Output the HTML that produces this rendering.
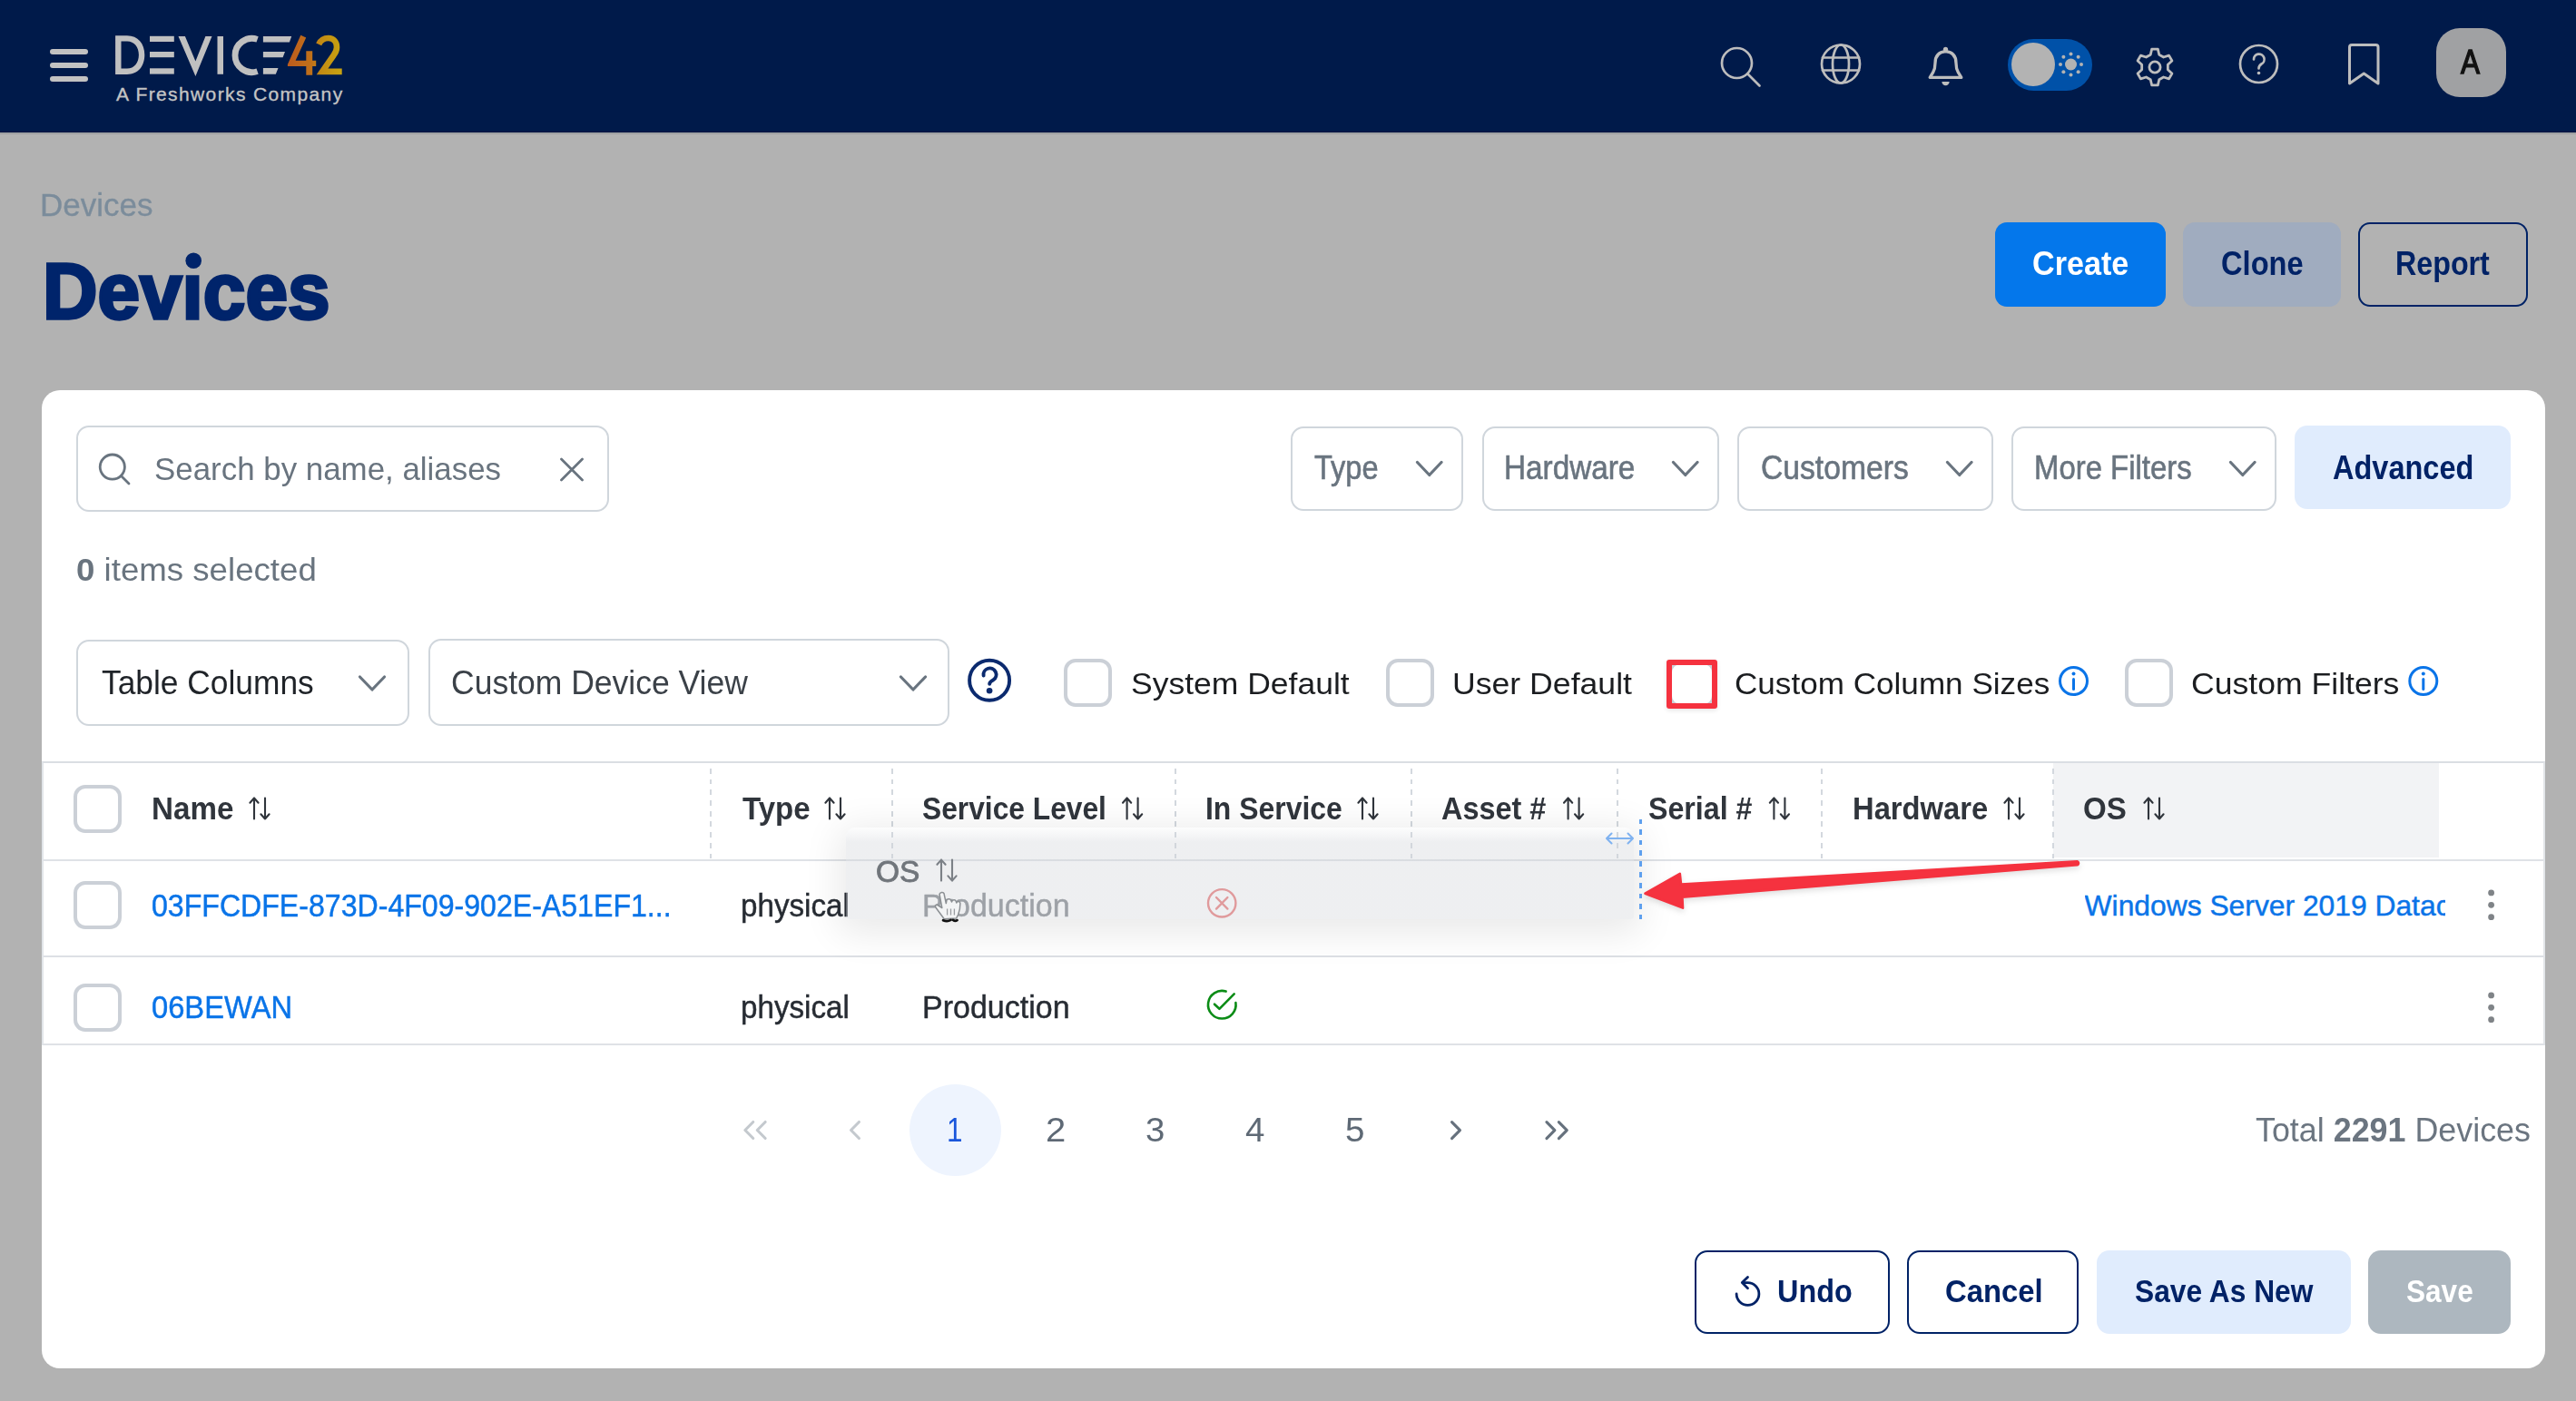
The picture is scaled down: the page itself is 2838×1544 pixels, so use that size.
<!DOCTYPE html><html><head><meta charset="utf-8"><style>
html,body{margin:0;padding:0;width:2838px;height:1544px;overflow:hidden;background:#b2b2b2;font-family:"Liberation Sans",sans-serif;}
.t{position:absolute;line-height:1;white-space:nowrap;}
svg{position:absolute;overflow:visible;}
</style></head><body>
<div style="position:absolute;left:0px;top:0px;width:2838px;height:146px;background:#001a4a;"></div>
<div style="position:absolute;left:0px;top:145px;width:2838px;height:1px;background:#00123f;"></div>
<div style="position:absolute;left:0px;top:146px;width:2838px;height:1px;background:#a5a6a7;"></div>
<div style="position:absolute;left:0px;top:147px;width:2838px;height:1px;background:#9d9ea0;"></div>
<div style="position:absolute;left:55px;top:54px;width:42px;height:6px;background:#c2c2c2;border-radius:3px;"></div>
<div style="position:absolute;left:55px;top:69px;width:42px;height:6px;background:#c2c2c2;border-radius:3px;"></div>
<div style="position:absolute;left:55px;top:84px;width:42px;height:6px;background:#c2c2c2;border-radius:3px;"></div>
<svg style="left:0;top:0" width="400" height="146">
<defs><linearGradient id="g42" gradientUnits="userSpaceOnUse" x1="317" y1="0" x2="377" y2="0"><stop offset="0" stop-color="#bd5b1d"/><stop offset="0.45" stop-color="#c0721a"/><stop offset="0.6" stop-color="#c28a14"/><stop offset="1" stop-color="#c9a410"/></linearGradient></defs>
<g fill="#c0c0c0">
<path d="M127.1 39.2 H140 C152 39.2 159.3 48 159.3 60.5 C159.3 73 152 81.9 140 81.9 H127.1 Z M133.5 45.5 V75.6 H140 C148 75.6 152.9 69 152.9 60.5 C152.9 52 148 45.5 140 45.5 Z" fill-rule="evenodd"/>
<rect x="165" y="39.8" width="26.8" height="6.2"/><rect x="165" y="57" width="26.8" height="6.2"/><rect x="165" y="75.3" width="26.8" height="6.3"/>
<path d="M196.5 40 H203.9 L215.4 67.5 L226.4 40 H233.5 L215.4 84.1 Z"/>
<rect x="239.5" y="40" width="6.5" height="41.8"/>
</g>
<path d="M283.6 43.4 A18.6 18.6 0 1 0 283.6 78.6" fill="none" stroke="#c0c0c0" stroke-width="6.8"/>
<path d="M289.9 40 H321.2 L318.9 46.6 H289.9 Z M289.9 57 H314 L311.6 63.3 H289.9 Z M289.9 74.9 H306.5 L303.8 81.7 H289.9 Z" fill="#c0c0c0"/>
<path d="M331.3 38.8 L337.2 41.4 L325.6 66.8 H337.3 V56.2 H344.2 V66.8 H348.2 V72.9 H344.2 V82.7 H337.3 V72.9 H316.9 V71 Z" fill="url(#g42)"/>
<path d="M351.2 48.8 C353.5 43.8 357.5 42 361.8 42 C367.5 42 371 46.5 371 52 C371 55.5 369.8 58 367.5 61 L355 78.9 H376.7" fill="none" stroke="url(#g42)" stroke-width="6.6" stroke-linejoin="miter"/>
</svg>
<div class="t" style="left:128.0px;top:93.2px;font-size:21px;color:#c4c4c4;font-weight:400;letter-spacing:1.38px;-webkit-text-stroke:0.35px #c4c4c4;">A Freshworks Company</div>
<svg style="left:0;top:0" width="2838" height="146" fill="none" stroke="#bdbdbd" stroke-width="2.7" stroke-linecap="round" stroke-linejoin="round">
<circle cx="1913.5" cy="69.5" r="16.5"/><line x1="1925.5" y1="81.5" x2="1938.5" y2="94.5"/>
<circle cx="2028" cy="70.5" r="21"/><ellipse cx="2028" cy="70.5" rx="9" ry="21"/><line x1="2008" y1="63.5" x2="2048" y2="63.5"/><line x1="2008" y1="77.5" x2="2048" y2="77.5"/>
<path d="M2126.2 85.4 H2160.8 L2157.3 79.6 C2155.5 76.5 2155 73.5 2155 69.5 C2155 61.5 2151 57.2 2143.5 56.6 C2136 57.2 2132 61.5 2132 69.5 C2132 73.5 2131.5 76.5 2129.7 79.6 Z" stroke-width="3.3"/>
<path d="M2139.4 90 A4.1 4.3 0 0 0 2147.6 90 Z" fill="#bdbdbd" stroke="none"/>
<circle cx="2143.5" cy="54.3" r="2.6" fill="#bdbdbd" stroke="none"/>
<circle cx="2488.5" cy="70.5" r="20.5"/>
<path d="M2483 65.5 A5.8 5.8 0 1 1 2491.5 70.5 C2489.5 71.8 2488.5 73 2488.5 75.5" />
<circle cx="2488.5" cy="80.5" r="1.8" fill="#bdbdbd" stroke="none"/>
<path d="M2588.5 92 V52 A2.5 2.5 0 0 1 2591 49.5 H2617.5 A2.5 2.5 0 0 1 2620 52 V92 L2604.3 81 Z" stroke-width="3"/>
</svg>
<svg style="left:0;top:0" width="2838" height="146" fill="none" stroke="#bdbdbd" stroke-width="2.8" stroke-linejoin="round"><path d="M2370.67 54.08 L2377.33 54.08 L2378.75 60.20 L2383.58 62.98 L2389.59 61.15 L2392.92 66.93 L2388.33 71.21 L2388.33 76.79 L2392.92 81.07 L2389.59 86.85 L2383.58 85.02 L2378.75 87.80 L2377.33 93.92 L2370.67 93.92 L2369.25 87.80 L2364.42 85.02 L2358.41 86.85 L2355.08 81.07 L2359.67 76.79 L2359.67 71.21 L2355.08 66.93 L2358.41 61.15 L2364.42 62.98 L2369.25 60.20 Z"/><circle cx="2374" cy="74" r="6.1"/></svg>
<div style="position:absolute;left:2212px;top:43px;width:93px;height:57px;background:#0051a8;border-radius:29px;"></div>
<div style="position:absolute;left:2216px;top:47px;width:48px;height:48px;background:#b3b3b3;border-radius:50%;"></div>
<svg style="left:0;top:0" width="2838" height="146"><circle cx="2281.5" cy="71" r="6.5" fill="#b3b3b3"/><circle cx="2293.00" cy="71.00" r="2" fill="#b3b3b3"/><circle cx="2289.63" cy="79.13" r="2" fill="#b3b3b3"/><circle cx="2281.50" cy="82.50" r="2" fill="#b3b3b3"/><circle cx="2273.37" cy="79.13" r="2" fill="#b3b3b3"/><circle cx="2270.00" cy="71.00" r="2" fill="#b3b3b3"/><circle cx="2273.37" cy="62.87" r="2" fill="#b3b3b3"/><circle cx="2281.50" cy="59.50" r="2" fill="#b3b3b3"/><circle cx="2289.63" cy="62.87" r="2" fill="#b3b3b3"/></svg>
<div style="position:absolute;left:2684px;top:31px;width:77px;height:76px;background:#a0a1a3;border-radius:26px;"></div>
<div class="t" style="left:2711.41px;top:50.94px;font-size:36.57px;color:#111;font-weight:400;transform:scaleX(0.8595);transform-origin:0 0;-webkit-text-stroke:1.4px #111;">A</div>
<div class="t" style="left:44.35px;top:208.65px;font-size:34.43px;color:#7b8c9b;font-weight:400;transform:scaleX(1.0178);transform-origin:0 0;-webkit-text-stroke:0.3px #7b8c9b;">Devices</div>
<div class="t" style="left:46.89px;top:276.79px;font-size:88px;color:#00246b;font-weight:700;transform:scaleX(0.9514);transform-origin:0 0;-webkit-text-stroke:3.4px #00246b;">Devices</div>
<svg style="left:0;top:0" width="1" height="1"><rect x="203.5" y="284.5" width="17" height="15" fill="#b2b2b2"/><circle cx="213.2" cy="287.2" r="8.8" fill="#00246b"/></svg>
<div style="position:absolute;left:2198px;top:245px;width:188px;height:93px;background:#0477eb;border-radius:13px;"></div>
<div class="t" style="left:2238.59px;top:272.67px;font-size:36.29px;color:#ffffff;font-weight:700;transform:scaleX(0.9418);transform-origin:0 0;">Create</div>
<div style="position:absolute;left:2405px;top:245px;width:174px;height:93px;background:#a0acbf;border-radius:13px;"></div>
<div class="t" style="left:2446.65px;top:272.67px;font-size:36.29px;color:#002266;font-weight:700;transform:scaleX(0.8998);transform-origin:0 0;">Clone</div>
<div style="position:absolute;left:2598px;top:245px;width:187px;height:93px;box-sizing:border-box;border:2.5px solid #002266;border-radius:13px;"></div>
<div class="t" style="left:2639.47px;top:272.67px;font-size:36.29px;color:#002266;font-weight:700;transform:scaleX(0.8884);transform-origin:0 0;">Report</div>
<div style="position:absolute;left:46px;top:430px;width:2758px;height:1078px;background:#ffffff;border-radius:20px;"></div>
<div style="position:absolute;left:84px;top:469px;width:587px;height:95px;box-sizing:border-box;border-radius:14px;border:2px solid #d0d6dc;"></div>
<svg style="left:0;top:0" width="1" height="1" fill="none" stroke="#69747f" stroke-width="2.8" stroke-linecap="round"><circle cx="123.8" cy="514.6" r="13.6"/><line x1="133.5" y1="524.5" x2="142" y2="533"/><line x1="618.5" y1="506" x2="641.5" y2="529"/><line x1="641.5" y1="506" x2="618.5" y2="529"/></svg>
<div class="t" style="left:170.21px;top:499.17px;font-size:35.0px;color:#69747f;font-weight:400;transform:scaleX(0.9968);transform-origin:0 0;">Search by name, aliases</div>
<div class="t" style="left:83.56px;top:610.76px;font-size:35.71px;color:#69747f;font-weight:400;transform:scaleX(1.0263);transform-origin:0 0;"><b>0</b> items selected</div>
<div style="position:absolute;left:1422px;top:470px;width:190px;height:93px;box-sizing:border-box;border-radius:14px;border:2px solid #d0d6dc;"></div>
<div class="t" style="left:1448.28px;top:498.20px;font-size:36.14px;color:#69747f;font-weight:400;transform:scaleX(0.9012);transform-origin:0 0;-webkit-text-stroke:0.6px #69747f;">Type</div>
<svg style="left:0;top:0" width="1" height="1"><path d="M1561.5 509.5 L1574.75 523.5 L1588 509.5" fill="none" stroke="#69747f" stroke-width="3.2" stroke-linecap="round" stroke-linejoin="round"/></svg>
<div style="position:absolute;left:1633px;top:470px;width:261px;height:93px;box-sizing:border-box;border-radius:14px;border:2px solid #d0d6dc;"></div>
<div class="t" style="left:1657.24px;top:498.20px;font-size:36.14px;color:#69747f;font-weight:400;transform:scaleX(0.9217);transform-origin:0 0;-webkit-text-stroke:0.6px #69747f;">Hardware</div>
<svg style="left:0;top:0" width="1" height="1"><path d="M1843.5 509.5 L1856.75 523.5 L1870 509.5" fill="none" stroke="#69747f" stroke-width="3.2" stroke-linecap="round" stroke-linejoin="round"/></svg>
<div style="position:absolute;left:1914px;top:470px;width:282px;height:93px;box-sizing:border-box;border-radius:14px;border:2px solid #d0d6dc;"></div>
<div class="t" style="left:1940.32px;top:498.20px;font-size:36.14px;color:#69747f;font-weight:400;transform:scaleX(0.9318);transform-origin:0 0;-webkit-text-stroke:0.6px #69747f;">Customers</div>
<svg style="left:0;top:0" width="1" height="1"><path d="M2145.5 509.5 L2158.75 523.5 L2172 509.5" fill="none" stroke="#69747f" stroke-width="3.2" stroke-linecap="round" stroke-linejoin="round"/></svg>
<div style="position:absolute;left:2216px;top:470px;width:292px;height:93px;box-sizing:border-box;border-radius:14px;border:2px solid #d0d6dc;"></div>
<div class="t" style="left:2241.27px;top:498.20px;font-size:36.14px;color:#69747f;font-weight:400;transform:scaleX(0.9104);transform-origin:0 0;-webkit-text-stroke:0.6px #69747f;">More Filters</div>
<svg style="left:0;top:0" width="1" height="1"><path d="M2457.5 509.5 L2470.75 523.5 L2484 509.5" fill="none" stroke="#69747f" stroke-width="3.2" stroke-linecap="round" stroke-linejoin="round"/></svg>
<div style="position:absolute;left:2528px;top:469px;width:238px;height:92px;box-sizing:border-box;border-radius:14px;background:#e0ecfd;"></div>
<div class="t" style="left:2569.89px;top:498.20px;font-size:36.14px;color:#002266;font-weight:700;transform:scaleX(0.8996);transform-origin:0 0;">Advanced</div>
<div style="position:absolute;left:84px;top:705px;width:367px;height:95px;box-sizing:border-box;border-radius:14px;border:2px solid #d0d6dc;"></div>
<div class="t" style="left:111.62px;top:735.15px;font-size:36.43px;color:#1f2328;font-weight:400;transform:scaleX(0.9703);transform-origin:0 0;">Table Columns</div>
<svg style="left:0;top:0" width="1" height="1"><path d="M396.5 746 L410.0 760 L423.5 746" fill="none" stroke="#69747f" stroke-width="3.2" stroke-linecap="round" stroke-linejoin="round"/></svg>
<div style="position:absolute;left:472px;top:704px;width:574px;height:96px;box-sizing:border-box;border-radius:14px;border:2px solid #d0d6dc;"></div>
<div class="t" style="left:497.25px;top:735.15px;font-size:36.43px;color:#3b4148;font-weight:400;transform:scaleX(0.9748);transform-origin:0 0;">Custom Device View</div>
<svg style="left:0;top:0" width="1" height="1"><path d="M992.5 746 L1006.0 760 L1019.5 746" fill="none" stroke="#69747f" stroke-width="3.2" stroke-linecap="round" stroke-linejoin="round"/></svg>
<svg style="left:0;top:0" width="1" height="1" fill="none" stroke="#0b2a6e" stroke-width="3.9" stroke-linecap="round"><circle cx="1090.1" cy="749.8" r="22"/><path d="M1083.6 744.5 A7 7 0 1 1 1094.5 749.2 C1091.8 750.6 1090.2 751.5 1090.2 753.8"/><circle cx="1090.1" cy="761.2" r="3.3" fill="#0b2a6e" stroke="none"/></svg>
<div style="position:absolute;left:1172px;top:726px;width:53px;height:53px;box-sizing:border-box;border:4px solid #cbd0d7;border-radius:13px;background:#fff;"></div>
<div class="t" style="left:1246.33px;top:735.81px;font-size:34.0px;color:#1b1d20;font-weight:400;transform:scaleX(1.0442);transform-origin:0 0;">System Default</div>
<div style="position:absolute;left:1527px;top:726px;width:53px;height:53px;box-sizing:border-box;border:4px solid #cbd0d7;border-radius:13px;background:#fff;"></div>
<div class="t" style="left:1599.98px;top:735.81px;font-size:34.0px;color:#1b1d20;font-weight:400;transform:scaleX(1.0478);transform-origin:0 0;">User Default</div>
<div style="position:absolute;left:1838px;top:728px;width:52px;height:52px;box-sizing:border-box;border:4px solid #cbd0d7;border-radius:13px;background:#fff;"></div>
<div style="position:absolute;left:1836px;top:727px;width:56px;height:54px;box-sizing:border-box;border:6px solid #f5323f;border-radius:3px;box-shadow:0 2px 5px rgba(0,0,0,0.10);"></div>
<div class="t" style="left:1910.84px;top:735.81px;font-size:34.0px;color:#1b1d20;font-weight:400;transform:scaleX(1.0324);transform-origin:0 0;">Custom Column Sizes</div>
<svg style="left:0;top:0" width="1" height="1" fill="none" stroke="#0a74e8" stroke-width="3"><circle cx="2284.5" cy="750.5" r="15"/><line x1="2284.5" y1="748.5" x2="2284.5" y2="759.5" stroke-linecap="round"/><circle cx="2284.5" cy="742.5" r="2" fill="#0a74e8" stroke="none"/></svg>
<div style="position:absolute;left:2340.5px;top:726px;width:53.0px;height:53px;box-sizing:border-box;border:4px solid #cbd0d7;border-radius:13px;background:#fff;"></div>
<div class="t" style="left:2413.92px;top:735.81px;font-size:34.0px;color:#1b1d20;font-weight:400;transform:scaleX(1.0467);transform-origin:0 0;">Custom Filters</div>
<svg style="left:0;top:0" width="1" height="1" fill="none" stroke="#0a74e8" stroke-width="3"><circle cx="2669.8" cy="750.5" r="15"/><line x1="2669.8" y1="748.5" x2="2669.8" y2="759.5" stroke-linecap="round"/><circle cx="2669.8" cy="742.5" r="2" fill="#0a74e8" stroke="none"/></svg>
<div style="position:absolute;left:46px;top:839px;width:2758px;height:313px;box-sizing:border-box;border:2px solid #e2e5e9;border-top-color:#dadee3;border-bottom-color:#dfe2e6;"></div>
<div style="position:absolute;left:2262px;top:841px;width:425px;height:104px;background:#f2f3f5;"></div>
<div style="position:absolute;left:48px;top:947px;width:2754px;height:2px;background:#dfe2e6;"></div>
<div style="position:absolute;left:48px;top:1053px;width:2754px;height:2px;background:#dde0e5;"></div>
<div style="position:absolute;left:782px;top:847px;width:2px;height:99px;background:repeating-linear-gradient(to bottom,#d3d8de 0 5.8px,transparent 5.8px 11.7px);"></div>
<div style="position:absolute;left:982px;top:847px;width:2px;height:99px;background:repeating-linear-gradient(to bottom,#d3d8de 0 5.8px,transparent 5.8px 11.7px);"></div>
<div style="position:absolute;left:1294px;top:847px;width:2px;height:99px;background:repeating-linear-gradient(to bottom,#d3d8de 0 5.8px,transparent 5.8px 11.7px);"></div>
<div style="position:absolute;left:1554px;top:847px;width:2px;height:99px;background:repeating-linear-gradient(to bottom,#d3d8de 0 5.8px,transparent 5.8px 11.7px);"></div>
<div style="position:absolute;left:1781px;top:847px;width:2px;height:99px;background:repeating-linear-gradient(to bottom,#d3d8de 0 5.8px,transparent 5.8px 11.7px);"></div>
<div style="position:absolute;left:2006px;top:847px;width:2px;height:99px;background:repeating-linear-gradient(to bottom,#d3d8de 0 5.8px,transparent 5.8px 11.7px);"></div>
<div style="position:absolute;left:2261px;top:847px;width:2px;height:99px;background:repeating-linear-gradient(to bottom,#d3d8de 0 5.8px,transparent 5.8px 11.7px);"></div>
<div style="position:absolute;left:81px;top:865px;width:53px;height:53px;box-sizing:border-box;border:4px solid #cbd0d7;border-radius:13px;background:#fff;"></div>
<div class="t" style="left:167.43px;top:873.15px;font-size:35.14px;color:#30353c;font-weight:700;transform:scaleX(0.9446);transform-origin:0 0;">Name</div>
<svg style="left:0;top:0" width="1" height="1" fill="none" stroke="#30353c" stroke-width="2.1" stroke-linecap="round" stroke-linejoin="round"><path d="M280 902.5 V879.5 M275.4 884.7 L280 879.5 L284.6 884.7"/><path d="M292 879.5 V902.5 M287.4 897.3 L292 902.5 L296.6 897.3"/></svg>
<div class="t" style="left:817.62px;top:873.15px;font-size:35.14px;color:#30353c;font-weight:700;transform:scaleX(0.9395);transform-origin:0 0;">Type</div>
<svg style="left:0;top:0" width="1" height="1" fill="none" stroke="#30353c" stroke-width="2.1" stroke-linecap="round" stroke-linejoin="round"><path d="M914 902.5 V879.5 M909.4 884.7 L914 879.5 L918.6 884.7"/><path d="M926 879.5 V902.5 M921.4 897.3 L926 902.5 L930.6 897.3"/></svg>
<div class="t" style="left:1016.40px;top:873.15px;font-size:35.14px;color:#30353c;font-weight:700;transform:scaleX(0.9036);transform-origin:0 0;">Service Level</div>
<svg style="left:0;top:0" width="1" height="1" fill="none" stroke="#30353c" stroke-width="2.1" stroke-linecap="round" stroke-linejoin="round"><path d="M1241.6 902.5 V879.5 M1237.0 884.7 L1241.6 879.5 L1246.1999999999998 884.7"/><path d="M1253.6 879.5 V902.5 M1249.0 897.3 L1253.6 902.5 L1258.1999999999998 897.3"/></svg>
<div class="t" style="left:1327.51px;top:873.15px;font-size:35.14px;color:#30353c;font-weight:700;transform:scaleX(0.9082);transform-origin:0 0;">In Service</div>
<svg style="left:0;top:0" width="1" height="1" fill="none" stroke="#30353c" stroke-width="2.1" stroke-linecap="round" stroke-linejoin="round"><path d="M1501 902.5 V879.5 M1496.4 884.7 L1501 879.5 L1505.6 884.7"/><path d="M1513 879.5 V902.5 M1508.4 897.3 L1513 902.5 L1517.6 897.3"/></svg>
<div class="t" style="left:1588.17px;top:873.15px;font-size:35.14px;color:#30353c;font-weight:700;transform:scaleX(0.9231);transform-origin:0 0;">Asset #</div>
<svg style="left:0;top:0" width="1" height="1" fill="none" stroke="#30353c" stroke-width="2.1" stroke-linecap="round" stroke-linejoin="round"><path d="M1727.6 902.5 V879.5 M1723.0 884.7 L1727.6 879.5 L1732.1999999999998 884.7"/><path d="M1739.6 879.5 V902.5 M1735.0 897.3 L1739.6 902.5 L1744.1999999999998 897.3"/></svg>
<div class="t" style="left:1816.08px;top:873.15px;font-size:35.14px;color:#30353c;font-weight:700;transform:scaleX(0.9157);transform-origin:0 0;">Serial #</div>
<svg style="left:0;top:0" width="1" height="1" fill="none" stroke="#30353c" stroke-width="2.1" stroke-linecap="round" stroke-linejoin="round"><path d="M1954.4 902.5 V879.5 M1949.8000000000002 884.7 L1954.4 879.5 L1959.0 884.7"/><path d="M1966.4 879.5 V902.5 M1961.8000000000002 897.3 L1966.4 902.5 L1971.0 897.3"/></svg>
<div class="t" style="left:2040.66px;top:873.15px;font-size:35.14px;color:#30353c;font-weight:700;transform:scaleX(0.9316);transform-origin:0 0;">Hardware</div>
<svg style="left:0;top:0" width="1" height="1" fill="none" stroke="#30353c" stroke-width="2.1" stroke-linecap="round" stroke-linejoin="round"><path d="M2213 902.5 V879.5 M2208.4 884.7 L2213 879.5 L2217.6 884.7"/><path d="M2225 879.5 V902.5 M2220.4 897.3 L2225 902.5 L2229.6 897.3"/></svg>
<div class="t" style="left:2295.28px;top:873.15px;font-size:35.14px;color:#30353c;font-weight:700;transform:scaleX(0.9417);transform-origin:0 0;">OS</div>
<svg style="left:0;top:0" width="1" height="1" fill="none" stroke="#30353c" stroke-width="2.1" stroke-linecap="round" stroke-linejoin="round"><path d="M2367 902.5 V879.5 M2362.4 884.7 L2367 879.5 L2371.6 884.7"/><path d="M2379 879.5 V902.5 M2374.4 897.3 L2379 902.5 L2383.6 897.3"/></svg>
<div style="position:absolute;left:81px;top:971px;width:53px;height:53px;box-sizing:border-box;border:4px solid #cbd0d7;border-radius:13px;background:#fff;"></div>
<div class="t" style="left:167.39px;top:980.73px;font-size:34.57px;color:#0a74e8;font-weight:400;transform:scaleX(0.9286);transform-origin:0 0;-webkit-text-stroke:0.45px #0a74e8;">03FFCDFE-873D-4F09-902E-A51EF1...</div>
<div class="t" style="left:815.89px;top:980.73px;font-size:34.57px;color:#272c33;font-weight:400;transform:scaleX(0.9601);transform-origin:0 0;-webkit-text-stroke:0.45px #272c33;">physical</div>
<div class="t" style="left:1015.85px;top:980.73px;font-size:34.57px;color:#80858b;font-weight:400;transform:scaleX(0.9837);transform-origin:0 0;-webkit-text-stroke:0.45px #80858b;">Production</div>
<svg style="left:0;top:0" width="1" height="1" fill="none" stroke="#e97a7a" stroke-width="2.4" stroke-linecap="round"><circle cx="1346.2" cy="995.3" r="15.2"/><path d="M1340 989 L1352.4 1001.6 M1352.4 989 L1340 1001.6"/></svg>
<div class="t" style="left:2296.6px;top:983.1px;font-size:31.8px;color:#0a74e8;width:397px;overflow:hidden;-webkit-text-stroke:0.45px #0a74e8;">Windows Server 2019 Datacenter</div>
<svg style="left:0;top:0" width="1" height="1"><circle cx="2744.6" cy="983.9" r="3.4" fill="#7f8387"/><circle cx="2744.6" cy="997.3" r="3.4" fill="#7f8387"/><circle cx="2744.6" cy="1010.6999999999999" r="3.4" fill="#7f8387"/></svg>
<div style="position:absolute;left:81px;top:1084px;width:53px;height:53px;box-sizing:border-box;border:4px solid #cbd0d7;border-radius:13px;background:#fff;"></div>
<div class="t" style="left:167.37px;top:1092.53px;font-size:34.57px;color:#0a74e8;font-weight:400;transform:scaleX(0.9461);transform-origin:0 0;-webkit-text-stroke:0.45px #0a74e8;">06BEWAN</div>
<div class="t" style="left:815.89px;top:1092.53px;font-size:34.57px;color:#272c33;font-weight:400;transform:scaleX(0.9601);transform-origin:0 0;-webkit-text-stroke:0.45px #272c33;">physical</div>
<div class="t" style="left:1015.85px;top:1092.53px;font-size:34.57px;color:#272c33;font-weight:400;transform:scaleX(0.9837);transform-origin:0 0;-webkit-text-stroke:0.45px #272c33;">Production</div>
<svg style="left:0;top:0" width="1" height="1" fill="none" stroke="#0b8c16" stroke-width="2.6" stroke-linecap="round" stroke-linejoin="round"><path d="M1350.6 1092.6 A15.3 15.3 0 1 0 1361.4 1105.1"/><path d="M1338 1106.7 L1343.4 1111.8 L1359.7 1095.3"/></svg>
<svg style="left:0;top:0" width="1" height="1"><circle cx="2744.6" cy="1096.8999999999999" r="3.4" fill="#7f8387"/><circle cx="2744.6" cy="1110.3" r="3.4" fill="#7f8387"/><circle cx="2744.6" cy="1123.7" r="3.4" fill="#7f8387"/></svg>
<div style="position:absolute;left:932px;top:912px;width:868px;height:101px;background:linear-gradient(to bottom,rgba(208,211,216,0.05) 0,rgba(208,211,216,0.36) 16px);border-radius:10px 10px 3px 3px;box-shadow:0 8px 40px 8px rgba(0,0,0,0.085);"></div>
<div class="t" style="left:965.23px;top:942.69px;font-size:34.14px;color:#70757b;font-weight:400;transform:scaleX(0.9805);transform-origin:0 0;-webkit-text-stroke:0.9px #70757b;">OS</div>
<svg style="left:0;top:0" width="1" height="1" fill="none" stroke="#7c8187" stroke-width="2.1" stroke-linecap="round" stroke-linejoin="round"><path d="M1037 970.6 V947.6 M1032.4 952.8000000000001 L1037 947.6 L1041.6 952.8000000000001"/><path d="M1049 947.6 V970.6 M1044.4 965.4 L1049 970.6 L1053.6 965.4"/></svg>
<div style="position:absolute;left:1806px;top:903px;width:3px;height:110px;background:repeating-linear-gradient(to bottom,#5fa0ee 0 5.8px,transparent 5.8px 11.8px);background-position:0 -1px;"></div>
<svg style="left:0;top:0" width="1" height="1" fill="none" stroke="#7fb2f0" stroke-width="2" stroke-linecap="round" stroke-linejoin="round"><path d="M1770 924 H1799 M1775.5 918.5 L1770 924 L1775.5 929.5 M1793.5 918.5 L1799 924 L1793.5 929.5"/></svg>
<svg style="left:0;top:0" width="1" height="1"><path d="M1035 985.5 C1035.5 983.3 1039.2 982.6 1040 984.6 L1042.3 995.5 L1043 991.8 C1044.5 990.4 1047 990.5 1047.8 992.4 L1048.5 994 C1049.2 991.2 1052.5 991.2 1053.2 993.2 L1053.8 994.9 C1054.6 992.6 1057.9 993 1057.9 995.6 C1057.9 1000 1057 1004.8 1055.6 1008 L1053.6 1012 L1040.2 1012.8 L1031 1000.2 C1029.6 998.2 1031.2 996.4 1033.2 997.5 L1037.8 1000.5 Z" fill="#f3f4f5" stroke="#8b8f93" stroke-width="1.5" stroke-linejoin="round"/><path d="M1043.6 1001.5 V1008.6 M1047.5 1001.5 V1008.6 M1051.4 1001.5 V1008.6" stroke="#9a9da1" stroke-width="1.3"/><path d="M1039 1014.2 Q1043.5 1016.2 1047.6 1013.9 M1049.9 1013.9 Q1052.3 1015.6 1054.6 1014.2" fill="none" stroke="#111" stroke-width="2.6" stroke-linecap="round"/></svg>
<svg style="left:0;top:0;filter:drop-shadow(0 3px 3px rgba(0,0,0,0.13))" width="2838" height="1544"><path d="M1812.5 984.7 L1850.8 962.8 L1852 974.6 L2288.5 949.2 A2.2 2.2 0 0 1 2288.7 953.3 L1853.4 988.6 L1854 1000.6 Z" fill="#f5323f" stroke="#f5323f" stroke-width="2.6" stroke-linejoin="round"/></svg>
<div style="position:absolute;left:1002px;top:1194.5px;width:101px;height:101.0px;background:#eef4fe;border-radius:50%;"></div>
<div class="t" style="left:1042.86px;top:1227.67px;font-size:36.29px;color:#1a56db;font-weight:400;transform:scaleX(0.8662);transform-origin:0 0;">1</div>
<div class="t" style="left:1151.91px;top:1227.67px;font-size:36.29px;color:#5e6975;font-weight:400;transform:scaleX(1.1030);transform-origin:0 0;">2</div>
<div class="t" style="left:1262.42px;top:1227.67px;font-size:36.29px;color:#5e6975;font-weight:400;transform:scaleX(1.0581);transform-origin:0 0;">3</div>
<div class="t" style="left:1372.45px;top:1227.67px;font-size:36.29px;color:#5e6975;font-weight:400;transform:scaleX(1.0601);transform-origin:0 0;">4</div>
<div class="t" style="left:1482.30px;top:1227.67px;font-size:36.29px;color:#5e6975;font-weight:400;transform:scaleX(1.0643);transform-origin:0 0;">5</div>
<svg style="left:0;top:0" width="1" height="1" fill="none" stroke="#c4c9ce" stroke-width="3.1" stroke-linecap="round" stroke-linejoin="round"><path d="M829.75 1236.5 L820.8499999999999 1245.5 L829.75 1254.5"/><path d="M843.1500000000001 1236.5 L834.25 1245.5 L843.1500000000001 1254.5"/></svg>
<svg style="left:0;top:0" width="1" height="1" fill="none" stroke="#c4c9ce" stroke-width="3.1" stroke-linecap="round" stroke-linejoin="round"><path d="M946.45 1236.5 L937.55 1245.5 L946.45 1254.5"/></svg>
<svg style="left:0;top:0" width="1" height="1" fill="none" stroke="#66717d" stroke-width="3.1" stroke-linecap="round" stroke-linejoin="round"><path d="M1599.55 1236.6 L1608.45 1245.6 L1599.55 1254.6"/></svg>
<svg style="left:0;top:0" width="1" height="1" fill="none" stroke="#66717d" stroke-width="3.1" stroke-linecap="round" stroke-linejoin="round"><path d="M1703.9499999999998 1236.6 L1712.85 1245.6 L1703.9499999999998 1254.6"/><path d="M1717.35 1236.6 L1726.25 1245.6 L1717.35 1254.6"/></svg>
<div class="t" style="left:2484.51px;top:1227.70px;font-size:36.14px;color:#6b7580;font-weight:400;transform:scaleX(0.9924);transform-origin:0 0;">Total <b>2291</b> Devices</div>
<div style="position:absolute;left:1867px;top:1378px;width:215px;height:92px;box-sizing:border-box;border:2.5px solid #002266;border-radius:14px;"></div>
<svg style="left:0;top:0" width="1" height="1" fill="none" stroke="#002266" stroke-width="2.8" stroke-linecap="round" stroke-linejoin="round"><path d="M1913.1 1426 A12.4 12.4 0 1 0 1925.5 1413.6 H1920"/><path d="M1925.5 1407.4 L1919.3 1413.6 L1925.5 1419.8"/></svg>
<div class="t" style="left:1958.08px;top:1406.30px;font-size:35.43px;color:#002266;font-weight:700;transform:scaleX(0.9138);transform-origin:0 0;">Undo</div>
<div style="position:absolute;left:2101px;top:1378px;width:189px;height:92px;box-sizing:border-box;border:2.5px solid #002266;border-radius:14px;"></div>
<div class="t" style="left:2142.70px;top:1406.30px;font-size:35.43px;color:#002266;font-weight:700;transform:scaleX(0.9269);transform-origin:0 0;">Cancel</div>
<div style="position:absolute;left:2310px;top:1378px;width:280px;height:92px;background:#e0ecfd;border-radius:14px;"></div>
<div class="t" style="left:2351.70px;top:1406.30px;font-size:35.43px;color:#002266;font-weight:700;transform:scaleX(0.8959);transform-origin:0 0;">Save As New</div>
<div style="position:absolute;left:2609px;top:1378px;width:157px;height:92px;background:#adb7bf;border-radius:14px;"></div>
<div class="t" style="left:2650.81px;top:1406.30px;font-size:35.43px;color:#ffffff;font-weight:700;transform:scaleX(0.8907);transform-origin:0 0;">Save</div>
</body></html>
